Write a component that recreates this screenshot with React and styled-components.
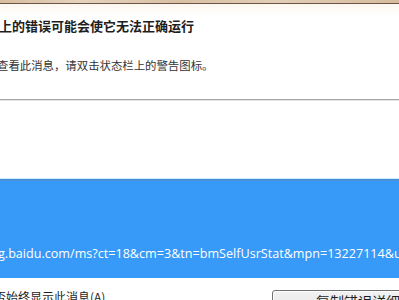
import React from 'react';
import styled, { createGlobalStyle } from 'styled-components';

const GlobalStyle = createGlobalStyle`
  html, body {
    margin: 0;
    padding: 0;
    background: #ffffff;
    overflow: hidden;
  }
  body {
    width: 399px;
    height: 300px;
    font-family: "Microsoft YaHei", "Noto Sans CJK SC", "Noto Sans", sans-serif;
  }
`;

const Dialog = styled.div`
  width: 399px;
  height: 300px;
  display: flex;
  flex-direction: column;
  background: #ffffff;
  overflow: hidden;
  & > * {
    flex-shrink: 0;
  }
`;

const TitleBar = styled.div`
  height: 3px;
  background: linear-gradient(90deg, #d8bc9f 0%, #e6d2bd 20%, #d9c0a5 45%, #e3cdb6 70%, #d6bb9e 100%);
  border-bottom: 1px solid #6a5646;
`;

const Header = styled.div`
  height: 96px;
  background: linear-gradient(180deg, #fdf6ef 0px, #ffffff 12px);
  border-bottom: 1px solid #a8a8a8;
  box-sizing: border-box;
  display: flex;
  flex-direction: column;
  padding-top: 12px;
`;

const Title = styled.div`
  margin-left: -1px;
  font-size: 13px;
  font-weight: bold;
  line-height: 20px;
  color: #1e1e1e;
  white-space: nowrap;
`;

const Message = styled.div`
  margin-top: 21px;
  margin-left: -3px;
  font-size: 11.4px;
  line-height: 16px;
  color: #333333;
  white-space: nowrap;
`;

const Body = styled.div`
  height: 78px;
  border-top: 1px solid #e2e2e2;
  box-sizing: border-box;
`;

const Selected = styled.div`
  height: 100px;
  background: #3799f8;
  border-top: 1px solid #c7ecfb;
  box-shadow: inset 0 2px 0 #4b8fd6;
  box-sizing: border-box;
  display: flex;
  align-items: flex-end;
  padding-bottom: 15px;
`;

const Url = styled.div`
  margin-left: -2px;
  font-family: "Open Sans", "Noto Sans", sans-serif;
  font-size: 12.6px;
  line-height: 18px;
  color: #ffffff;
  white-space: nowrap;
`;

const Footer = styled.div`
  flex: 1;
  display: flex;
  align-items: flex-start;
  justify-content: space-between;
  padding-top: 12px;
`;

const Check = styled.div`
  margin-left: -18px;
  margin-top: -1px;
  font-size: 12px;
  line-height: 16px;
  color: #1e1e1e;
  white-space: nowrap;
`;

const Button = styled.div`
  width: 150px;
  height: 24px;
  margin-right: -23px;
  box-sizing: border-box;
  border: 1px solid #707070;
  border-radius: 3px;
  background: linear-gradient(180deg, #f2f2f2 0%, #ebebeb 50%, #dddddd 51%, #cfcfcf 100%);
  box-shadow: inset 0 0 0 1px #fcfcfc;
  font-size: 14px;
  line-height: 20px;
  padding-left: 43px;
  color: #1e1e1e;
  white-space: nowrap;
`;

export default function App() {
  return (
    <Dialog>
      <GlobalStyle />
      <TitleBar />
      <Header>
        <Title>上的错误可能会使它无法正确运行</Title>
        <Message>查看此消息，请双击状态栏上的警告图标。</Message>
      </Header>
      <Body />
      <Selected>
        <Url>g.baidu.com/ms?ct=18&amp;cm=3&amp;tn=bmSelfUsrStat&amp;mpn=13227114&amp;u</Url>
      </Selected>
      <Footer>
        <Check>是否始终显示此消息(A)</Check>
        <Button>复制错误详细信息</Button>
      </Footer>
    </Dialog>
  );
}
